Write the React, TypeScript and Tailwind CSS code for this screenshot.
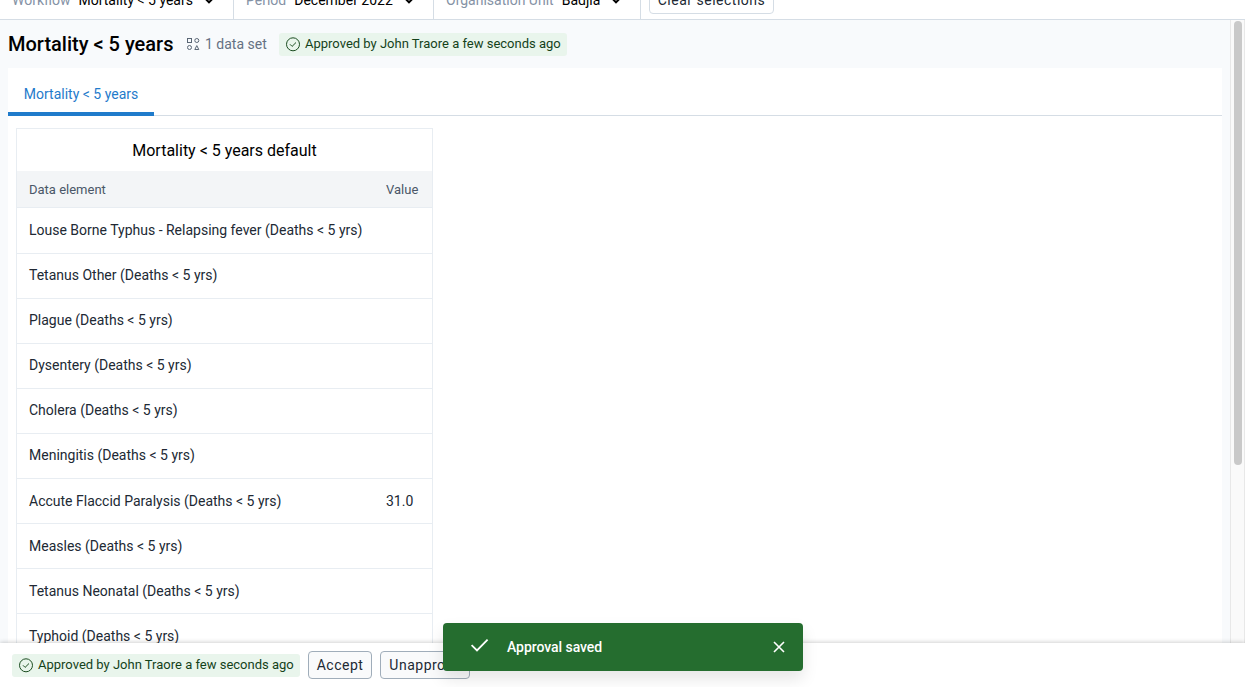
import React from 'react'

const rows: { name: string; value?: string }[] = [
  { name: 'Louse Borne Typhus - Relapsing fever (Deaths < 5 yrs)' },
  { name: 'Tetanus Other (Deaths < 5 yrs)' },
  { name: 'Plague (Deaths < 5 yrs)' },
  { name: 'Dysentery (Deaths < 5 yrs)' },
  { name: 'Cholera (Deaths < 5 yrs)' },
  { name: 'Meningitis (Deaths < 5 yrs)' },
  { name: 'Accute Flaccid Paralysis (Deaths < 5 yrs)', value: '31.0' },
  { name: 'Measles (Deaths < 5 yrs)' },
  { name: 'Tetanus Neonatal (Deaths < 5 yrs)' },
  { name: 'Typhoid (Deaths < 5 yrs)' },
]

function ChevronDown() {
  return (
    <svg className="size-4" viewBox="0 0 16 16" fill="none" stroke="#000" strokeWidth="2">
      <path d="M4 6.3l4 4 4-4" />
    </svg>
  )
}

function Selector({ label, value, className }: { label: string; value: string; className: string }) {
  return (
    <button className={`flex h-full shrink-0 items-center border-r border-[#d5dde5] pl-3 pt-px text-sm ${className}`}>
      <span className="text-[#8592a5]">{label}</span>
      <span className="ml-2 mr-2 text-black">{value}</span>
      <ChevronDown />
    </button>
  )
}

function ApprovedTag() {
  return (
    <div className="flex h-[23px] w-[288px] shrink-0 items-center rounded-[3px] bg-[#e9f5ec] pl-1.5 text-[13px] text-[#14421a]">
      <svg className="mr-1 size-4 shrink-0" viewBox="0 0 16 16" fill="none" stroke="#1b4d20">
        <circle cx="8" cy="8.3" r="6.5" />
        <path d="M5 8.3l2.1 2.1L11 6.5" />
      </svg>
      <span className="whitespace-nowrap">Approved by John Traore a few seconds ago</span>
    </div>
  )
}

export default function App() {
  return (
    <div className="flex h-[687px] w-[1245px] flex-col overflow-hidden bg-white font-[Roboto,sans-serif] text-[#212934]">
      <header className="flex h-5 shrink-0 flex-col justify-end overflow-hidden border-b border-[#d5dde5]">
        <div className="flex h-[39px] shrink-0">
          <Selector label="Workflow" value="Mortality < 5 years" className="w-[234px]" />
          <Selector label="Period" value="December 2022" className="w-[200px]" />
          <Selector label="Organisation Unit" value="Badjia" className="w-[207px]" />
          <button className="ml-2 mt-1.5 h-7 w-[125px] rounded border border-[#d5dde5] text-sm tracking-[0.5px]">
            Clear selections
          </button>
        </div>
      </header>

      <div className="flex min-h-0 flex-1">
        <main className="flex min-w-0 flex-1 flex-col overflow-hidden bg-[#f8fafc] px-2">
          <div className="flex h-12 shrink-0 items-center">
            <h1 className="w-[178px] whitespace-nowrap text-xl font-medium text-black">Mortality &lt; 5 years</h1>
            <svg className="size-4" viewBox="0 0 16 16" fill="none" stroke="#5a6675">
              <rect x="1.5" y="2.5" width="4" height="4" />
              <circle cx="10.8" cy="4.5" r="2" />
              <circle cx="3.5" cy="11.5" r="2" />
              <path d="M10.8 9.6l2 3.9h-4z" />
            </svg>
            <span className="ml-[3px] w-[74px] whitespace-nowrap text-sm text-[#657183]">1 data set</span>
            <ApprovedTag />
          </div>
          <section className="w-[1214px] flex-1 overflow-hidden bg-white">
            <nav className="flex h-12 border-b border-[#d5dde5]">
              <button className="h-12 w-[146px] border-b-4 border-[#1f7bcb] pt-2 text-sm text-[#1f7bcb]">
                Mortality &lt; 5 years
              </button>
            </nav>
            <div className="ml-2 mt-3 w-[417px] border border-[#e8edf2]">
              <h2 className="flex h-[42px] items-center justify-center pt-0.5 text-base text-black">
                Mortality &lt; 5 years default
              </h2>
              <div className="flex h-[37px] items-center border-b border-[#e8edf2] bg-[#f3f5f7] pt-px text-[13px] text-[#4a5768]">
                <span className="w-[369px] pl-3">Data element</span>
                <span>Value</span>
              </div>
              <div>
                {rows.map((row, i) => (
                  <div
                    key={row.name}
                    className={`flex items-center border-b border-[#e8edf2] text-sm ${i === 0 ? 'h-[46px]' : 'h-[45px]'} ${i < 6 ? 'pb-0.5' : ''}`}
                  >
                    <span className="w-[369px] whitespace-nowrap pl-3">{row.name}</span>
                    <span>{row.value}</span>
                  </div>
                ))}
              </div>
            </div>
          </section>
        </main>
        <aside className="w-[15px] shrink-0 border-x border-[#e8e8e8] bg-[#fafafa] pl-[3px] pt-px">
          <div className="h-[444px] w-2 rounded-full bg-[#c9c9c9]" />
        </aside>
      </div>

      <footer className="relative flex h-11 shrink-0 items-center bg-white pl-3 shadow-[0_-1px_4px_rgba(0,0,0,0.18)]">
        <ApprovedTag />
        <button className="ml-2 h-7 w-16 rounded border border-[#a0adba] bg-[#f9fafb] text-sm tracking-[0.5px]">
          Accept
        </button>
        <button className="ml-2 h-7 w-[90px] rounded border border-[#a0adba] bg-[#f9fafb] text-sm tracking-[0.5px]">
          Unapprove
        </button>
      </footer>

      <div className="absolute left-[443px] top-[623px] flex h-12 w-[360px] items-center rounded bg-[#256d2f] pl-6 pr-4 text-sm text-white shadow-[0_8px_16px_rgba(0,0,0,0.10)]">
        <svg className="size-6" viewBox="0 0 24 24" fill="none" stroke="#fff" strokeWidth="1.8">
          <path d="M4.6 10.1l5.4 5.3L20.6 4.6" />
        </svg>
        <span className="ml-4 flex-1 font-medium tracking-[-0.05px]">Approval saved</span>
        <svg className="size-4" viewBox="0 0 16 16" fill="none" stroke="#fff" strokeWidth="1.6">
          <path d="M3 3l10 10M13 3L3 13" />
        </svg>
      </div>
    </div>
  )
}
